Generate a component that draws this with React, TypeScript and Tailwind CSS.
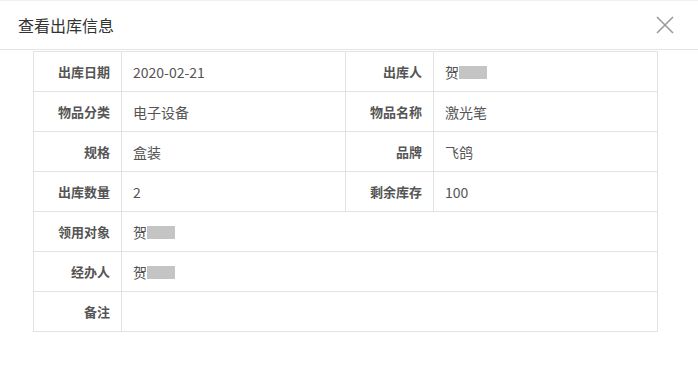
import React from "react";

const font = { fontFamily: '"Noto Sans CJK SC", "Microsoft YaHei", sans-serif' };

function Masked() {
  return (
    <span className="inline-flex items-center">
      贺<span className="inline-block w-[28px] h-[13px] bg-[#c4c4c4]" />
    </span>
  );
}

function Label({ children }: { children: React.ReactNode }) {
  return (
    <td className="border border-[#e2e2e2] text-right pr-[11px] text-[13px] font-bold text-[#555] align-middle">
      {children}
    </td>
  );
}

function Value({ children, span }: { children?: React.ReactNode; span?: number }) {
  return (
    <td colSpan={span} className="border border-[#e2e2e2] pl-[11px] pt-[2px] text-[14px] text-[#555] align-middle">
      {children}
    </td>
  );
}

export default function App() {
  return (
    <div className="w-[698px] h-[365px] bg-white overflow-hidden" style={font}>
      <div className="h-[1px] bg-[#f0f0f0]" />
      <div className="h-[49px] border-b border-[#e5e5e5] flex items-center justify-between pl-[18px] pr-[24px]">
        <span className="text-[16px] text-[#333]">查看出库信息</span>
        <svg width="18" height="18" viewBox="0 0 18 18">
          <path d="M1 1 L17 17 M17 1 L1 17" stroke="#999" strokeWidth="1.6" fill="none" />
        </svg>
      </div>
      <div className="pl-[33px] pt-[1px]">
        <table className="w-[624px] table-fixed border-collapse">
          <colgroup>
            <col className="w-[88px]" />
            <col className="w-[224px]" />
            <col className="w-[88px]" />
            <col className="w-[224px]" />
          </colgroup>
          <tbody>
            <tr className="h-[40px]">
              <Label>出库日期</Label>
              <Value>2020-02-21</Value>
              <Label>出库人</Label>
              <Value><Masked /></Value>
            </tr>
            <tr className="h-[40px]">
              <Label>物品分类</Label>
              <Value>电子设备</Value>
              <Label>物品名称</Label>
              <Value>激光笔</Value>
            </tr>
            <tr className="h-[40px]">
              <Label>规格</Label>
              <Value>盒装</Value>
              <Label>品牌</Label>
              <Value>飞鸽</Value>
            </tr>
            <tr className="h-[40px]">
              <Label>出库数量</Label>
              <Value>2</Value>
              <Label>剩余库存</Label>
              <Value>100</Value>
            </tr>
            <tr className="h-[40px]">
              <Label>领用对象</Label>
              <Value span={3}><Masked /></Value>
            </tr>
            <tr className="h-[40px]">
              <Label>经办人</Label>
              <Value span={3}><Masked /></Value>
            </tr>
            <tr className="h-[40px]">
              <Label>备注</Label>
              <Value span={3} />
            </tr>
          </tbody>
        </table>
      </div>
    </div>
  );
}
